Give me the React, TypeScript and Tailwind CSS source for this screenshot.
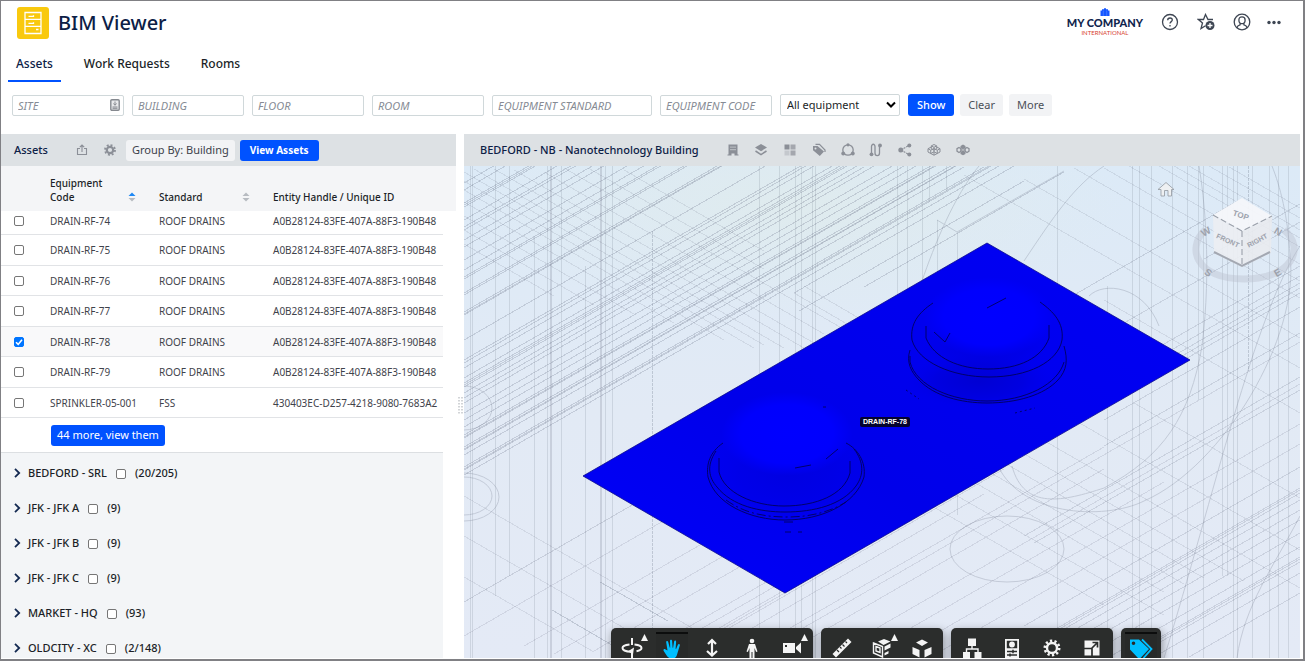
import React, { useState } from 'react';

interface AssetRow {
  code: string;
  standard: string;
  handle: string;
}

interface BuildingGroup {
  name: string;
  count: string;
}

const ASSETS: AssetRow[] = [
  { code: 'DRAIN-RF-74', standard: 'ROOF DRAINS', handle: 'A0B28124-83FE-407A-88F3-190B48' },
  { code: 'DRAIN-RF-75', standard: 'ROOF DRAINS', handle: 'A0B28124-83FE-407A-88F3-190B48' },
  { code: 'DRAIN-RF-76', standard: 'ROOF DRAINS', handle: 'A0B28124-83FE-407A-88F3-190B48' },
  { code: 'DRAIN-RF-77', standard: 'ROOF DRAINS', handle: 'A0B28124-83FE-407A-88F3-190B48' },
  { code: 'DRAIN-RF-78', standard: 'ROOF DRAINS', handle: 'A0B28124-83FE-407A-88F3-190B48' },
  { code: 'DRAIN-RF-79', standard: 'ROOF DRAINS', handle: 'A0B28124-83FE-407A-88F3-190B48' },
  { code: 'SPRINKLER-05-001', standard: 'FSS', handle: '430403EC-D257-4218-9080-7683A2' },
];

const GROUPS: BuildingGroup[] = [
  { name: 'BEDFORD - SRL', count: '(20/205)' },
  { name: 'JFK - JFK A', count: '(9)' },
  { name: 'JFK - JFK B', count: '(9)' },
  { name: 'JFK - JFK C', count: '(9)' },
  { name: 'MARKET - HQ', count: '(93)' },
  { name: 'OLDCITY - XC', count: '(2/148)' },
];

const CHECKBOX =
  'block size-[10px] shrink-0 appearance-none rounded-[2px] border border-[#767676] bg-white checked:border-[#0075ff] checked:bg-[#0075ff]';

// --- Header ---

const AppLogo = () => (
  <svg viewBox="0 0 32 32" className="size-8">
    <rect width="32" height="32" rx="3" fill="#f9c90e" />
    <g fill="none" stroke="#fff" strokeWidth="1.3">
      <path d="M8 5.5h16v21H8zM8.5 12.3h15M8.5 19.3h15" />
      <path d="M11.5 9.3h5v-1M11.5 16.3h5v-1M19 22.5h2.5" />
    </g>
  </svg>
);

const CompanyLogo = () => (
  <div className="flex flex-col items-center">
    <svg viewBox="0 0 10 8" className="h-2 w-[10px]">
      <path d="M0.5 8V2.500h1.500V1.300h2V0.300h2v1h2v1.200h1.500V8z" fill="#1456ff" />
      <path d="M3.300 2.500V8M6.700 2.500V8" stroke="#6c98ff" strokeWidth="0.5" />
    </svg>
    <span className="font-['Lato',sans-serif] text-[11px] leading-[13px] font-black text-[#10254d]">MY COMPANY</span>
    <span className="font-['Lato',sans-serif] text-[6px] leading-[7px] text-[#d8452f]">INTERNATIONAL</span>
  </div>
);

const HelpIcon = () => (
  <svg viewBox="0 0 18 18" className="size-[18px]" fill="none" stroke="#3e4653" strokeWidth="1.3">
    <circle cx="9" cy="9" r="7.500" />
    <path d="M6.700 7.200c0-1.400 1-2.200 2.300-2.200s2.300.8 2.300 2c0 1.600-2.300 1.700-2.300 3.600" />
    <path d="M9 12v1.400" />
  </svg>
);

const StarIcon = () => (
  <svg viewBox="0 0 18 18" className="size-[18px]">
    <path
      d="M16 6.500h-5L8.500 1.500 6.500 6.500H1.400l4.100 3.500-1.500 5.500 4.500-2.800"
      fill="none"
      stroke="#3e4653"
      strokeWidth="1.3"
    />
    <circle cx="13" cy="12.500" r="4.500" fill="#3e4653" />
    <path d="M13 10v5M10.500 12.500h5" stroke="#fff" strokeWidth="1.3" />
  </svg>
);

const UserIcon = () => (
  <svg viewBox="0 0 18 18" className="size-[18px]" fill="none" stroke="#3e4653" strokeWidth="1.3">
    <circle cx="9" cy="9" r="7.800" />
    <path d="M9 3.800c2 0 3.100 1.300 3.100 3.100S11 10.700 9 10.700 5.900 8.800 5.900 6.900 7 3.800 9 3.800z" />
    <path d="M4 14.800c.3-1.700 1.300-2.500 3-2.900l.3-1.500M14 14.800c-.3-1.700-1.300-2.500-3-2.900l-.3-1.500" />
  </svg>
);

const Header = () => (
  <header className="flex h-11 items-center justify-between pr-[22px] pl-4">
    <div className="flex items-center gap-[9px]">
      <AppLogo />
      <h1 className="text-[20px] font-medium text-[#0c2046]">BIM Viewer</h1>
    </div>
    <div className="flex items-center gap-[18px] pb-[2px]">
      <CompanyLogo />
      <button aria-label="Help"><HelpIcon /></button>
      <button aria-label="Add to favorites"><StarIcon /></button>
      <button aria-label="Profile"><UserIcon /></button>
      <button aria-label="More options" className="-ml-[2px]">
        <svg viewBox="0 0 14 18" className="h-[18px] w-[14px]" fill="#3e4653">
          <circle cx="2" cy="9.500" r="1.700" />
          <circle cx="7" cy="9.500" r="1.700" />
          <circle cx="12" cy="9.500" r="1.700" />
        </svg>
      </button>
    </div>
  </header>
);

const TABS = ['Assets', 'Work Requests', 'Rooms'];

const Tabs = () => {
  const [active, setActive] = useState('Assets');
  return (
    <nav className="flex h-[37px] gap-[15px] pl-[7px]">
      {TABS.map(tab => (
        <button
          key={tab}
          onClick={() => setActive(tab)}
          className={`border-b-2 px-2 pt-[2px] text-[12px] font-medium ${tab === active ? 'border-[#0052ff] text-[#0c2046]' : 'border-transparent text-[#1b1f27]'}`}
        >
          {tab}
        </button>
      ))}
    </nav>
  );
};

// --- Filters ---

const INPUT =
  'block h-[21px] w-full rounded-[2px] border border-[#d0d8da] px-[5px] text-[11px] placeholder:text-[#868b94] placeholder:italic';

const FilterBar = () => (
  <form className="flex items-center gap-2 pt-3 pl-[11px]" onSubmit={e => e.preventDefault()}>
    <div className="relative w-[112px]">
      <input aria-label="Site" placeholder="SITE" className={INPUT} />
      <svg viewBox="0 0 10 12" className="absolute top-[4px] right-[4px] h-3 w-[10px]">
        <rect x="0.800" y="0.800" width="8.400" height="10.400" rx="1" fill="#e9eaec" stroke="#85898f" strokeWidth="1.400" />
        <path d="M5 2.500v3M3.500 4.500L5 6.300l1.500-1.800M2.500 8h5M2.500 9.300h5" fill="none" stroke="#85898f" />
      </svg>
    </div>
    <div className="w-[112px]"><input aria-label="Building" placeholder="BUILDING" className={INPUT} /></div>
    <div className="w-[112px]"><input aria-label="Floor" placeholder="FLOOR" className={INPUT} /></div>
    <div className="w-[112px]"><input aria-label="Room" placeholder="ROOM" className={INPUT} /></div>
    <div className="w-40"><input aria-label="Equipment standard" placeholder="EQUIPMENT STANDARD" className={INPUT} /></div>
    <div className="w-[112px]"><input aria-label="Equipment code" placeholder="EQUIPMENT CODE" className={INPUT} /></div>
    <div className="relative w-[120px]">
      <select
        aria-label="Equipment filter"
        className="block h-[22px] w-full appearance-none rounded-[2px] border border-[#d0d8da] bg-white px-[6px] text-[11px] text-[#1b1f27]"
      >
        <option>All equipment</option>
      </select>
      <svg viewBox="0 0 10 8" className="pointer-events-none absolute top-[7px] right-[4px] h-2 w-[10px]">
        <path d="M1 1.500l4 4 4-4" fill="none" stroke="#000" strokeWidth="2" />
      </svg>
    </div>
    <div className="flex gap-[6px]">
      <button className="h-[22px] rounded-[3px] bg-[#0052ff] px-[9px] text-[11px] font-medium text-white">Show</button>
      <button className="h-[22px] rounded-[3px] bg-[#f2f3f5] px-2 text-[11px] text-[#4a4f58]">Clear</button>
      <button className="h-[22px] rounded-[3px] bg-[#f2f3f5] px-2 text-[11px] text-[#4a4f58]">More</button>
    </div>
  </form>
);

// --- Assets panel ---

const SortIcon = ({ active }: { active?: boolean }) => (
  <svg viewBox="0 0 8 10" className="mb-[2px] h-[10px] w-2 shrink-0">
    <path d="M4 0.500L7.500 4h-7z" fill={active ? '#1e88f5' : '#b7bbc1'} />
    <path d="M4 9.500L7.500 6h-7z" fill="#b7bbc1" />
  </svg>
);

const Check = ({ label, checked, onChange }: { label: string; checked: boolean; onChange: () => void }) => (
  <span className="relative block w-[10px]">
    <input type="checkbox" aria-label={label} checked={checked} onChange={onChange} className={CHECKBOX} />
    {checked && (
      <svg viewBox="0 0 10 10" className="pointer-events-none absolute inset-0 size-[10px]">
        <path d="M2 5.200l2.200 2.200L8 2.800" fill="none" stroke="#fff" strokeWidth="1.600" />
      </svg>
    )}
  </span>
);

const AssetsPanel = () => {
  const [selected, setSelected] = useState<string[]>(['DRAIN-RF-78']);

  const toggle = (key: string) => {
    setSelected(prev => (prev.includes(key) ? prev.filter(k => k !== key) : [...prev, key]));
  };

  return (
    <section className="flex w-[455px] shrink-0 flex-col overflow-hidden">
      <div className="flex h-8 shrink-0 items-center bg-[#dde1e4] pl-[13px]">
        <h2 className="w-[62px] text-[11px] font-medium text-[#0c2046]">Assets</h2>
        <button aria-label="Export" className="mr-4">
          <svg viewBox="0 0 12 12" className="size-3" fill="none" stroke="#8b8f97" strokeWidth="1.100">
            <path d="M4 4.500H1.500v6h9v-6H8M6 8V1.200M3.800 3.200L6 1l2.200 2.200" />
          </svg>
        </button>
        <button aria-label="Settings" className="mr-[10px]">
          <svg viewBox="0 0 12 12" className="size-3" fill="none" stroke="#8b8f97">
            <circle cx="6" cy="6" r="3.200" strokeWidth="2.200" />
            <circle cx="6" cy="6" r="5" strokeWidth="1.800" strokeDasharray="1.960 1.960" />
          </svg>
        </button>
        <button className="mr-[5px] h-[21px] rounded-[3px] bg-[#f2f3f5] px-[6px] text-[11px] text-[#3c414b]">Group By: Building</button>
        <button className="h-[21px] rounded-[3px] bg-[#0052ff] px-[10px] text-[10px] font-bold text-white">View Assets</button>
      </div>

      <table className="w-full table-fixed border-separate border-spacing-0 text-left text-[10px]">
        <colgroup>
          <col className="w-[42px]" />
          <col className="w-[109px]" />
          <col className="w-[114px]" />
          <col />
          <col className="w-[13px]" />
        </colgroup>
        <thead>
          <tr className="h-[45px] bg-[#f4f5f7] align-bottom leading-[14px] text-[#1b1f27]">
            <th aria-label="Select" />
            <th className="pb-[7px] pl-[7px] font-medium">
              <div className="flex items-end justify-between pr-4">
                <span>Equipment<br />Code</span>
                <SortIcon active />
              </div>
            </th>
            <th className="pb-[7px] pl-[7px] font-medium">
              <div className="flex items-end justify-between pr-4">
                <span>Standard</span>
                <SortIcon />
              </div>
            </th>
            <th className="pb-[7px] pl-[7px] font-medium">Entity Handle / Unique ID</th>
            <th aria-hidden="true" />
          </tr>
        </thead>
        <tbody className="leading-4 whitespace-nowrap text-[#3f434b] [&_td]:p-0 [&_td:not(:last-child)]:border-b [&_td:not(:last-child)]:border-[#e1e3e6]">
          {ASSETS.map((row, i) => {
            const checked = selected.includes(row.code);
            const cell = `overflow-hidden pl-[7px]! ${checked ? 'bg-[#f9f9fa]' : ''}`;
            return (
              <tr key={row.code} className={i === 0 ? 'h-6 [&_td]:pb-[3px]!' : 'h-[30px] even:h-[31px]'}>
                <td className={`pl-[13px]! ${checked ? 'bg-[#f9f9fa]' : ''}`}>
                  <Check label={row.code} checked={checked} onChange={() => toggle(row.code)} />
                </td>
                <td className={cell}>{row.code}</td>
                <td className={cell}>{row.standard}</td>
                <td className={cell}>{row.handle}</td>
                <td />
              </tr>
            );
          })}
        </tbody>
      </table>

      <div className="mr-[13px] h-[35px] shrink-0 border-b border-[#dcdfe2] pt-[7px] pl-[50px]">
        <button className="block h-[21px] rounded-[3px] bg-[#0052ff] px-[6px] text-[11px] text-white">44 more, view them</button>
      </div>

      <ul className="mr-[13px] flex-1 bg-[#f3f5f7] pt-[3px]">
        {GROUPS.map(group => (
          <li key={group.name} className="flex h-[35px] items-center text-[11px] font-medium text-[#1b1f27]">
            <button aria-label={`Expand ${group.name}`} className="mr-[7px] ml-3 pb-[2px]">
              <svg viewBox="0 0 8 10" className="h-[10px] w-2">
                <path d="M2 0.800L6.200 5 2 9.200" fill="none" stroke="#142a52" strokeWidth="1.800" />
              </svg>
            </button>
            <span className="mr-[9px]">{group.name}</span>
            <Check label={group.name} checked={selected.includes(group.name)} onChange={() => toggle(group.name)} />
            <span className="ml-[9px]">{group.count}</span>
          </li>
        ))}
      </ul>
    </section>
  );
};

// --- Model scene ---

const SLOPE = 0.577;

// [intercept, from x, to x]
type Seg = [number, number, number];

const rise = (segs: Seg[]) =>
  segs.map(([c, a, b]) => `M${a} ${Math.round(c - SLOPE * a)}L${b} ${Math.round(c - SLOPE * b)}`).join('');
const fall = (segs: Seg[]) =>
  segs.map(([c, a, b]) => `M${a} ${Math.round(c + SLOPE * a)}L${b} ${Math.round(c + SLOPE * b)}`).join('');
const verticals = (segs: Seg[]) => segs.map(([x, a, b]) => `M${x}.5 ${a}V${b}`).join('');

const ROOF_RISE: Seg[] = [
  [17, 0, 40], [24, 0, 60], [37, 0, 70], [41, 0, 80], [54, 0, 100], [61, 0, 110], [64, 0, 115], [74, 0, 130],
  [81, 0, 150], [94, 0, 170], [104, 0, 190], [111, 0, 200], [113, 0, 200], [127, 0, 230], [129, 0, 230],
  [146, 0, 260], [149, 0, 270], [174, 0, 310], [194, 0, 340], [197, 0, 345], [202, 0, 350], [212, 0, 370],
  [217, 0, 376], [221, 0, 383], [227, 0, 393], [232, 0, 400], [237, 0, 410], [247, 0, 430], [254, 0, 440],
  [261, 0, 452], [269, 0, 470], [272, 0, 475], [281, 0, 490], [284, 0, 492], [289, 0, 500], [301, 0, 520],
  [304, 0, 527], [309, 0, 535], [317, 330, 550], [338, 335, 560], [352, 400, 600],
];

const ROOF_DARK: Seg[] = [
  [39, 0, 70], [148, 0, 260], [219, 0, 380], [271, 0, 472], [283, 0, 491], [303, 0, 525], [436, 0, 170], [481, 570, 770],
];

const LOWER_RISE: Seg[] = [
  [470, 0, 220], [515, 60, 290], [540, 90, 320], [560, 130, 400], [590, 200, 500], [600, 190, 520],
  [609, 200, 540], [612, 210, 540], [615, 215, 540], [628, 240, 520], [650, 300, 640], [658, 320, 836],
  [672, 330, 640], [700, 380, 836], [720, 400, 700], [740, 440, 836], [760, 470, 836],
];

const RIGHT_RISE: Seg[] = [
  [520, 740, 836], [538, 660, 836], [582, 620, 836], [592, 610, 836], [599, 600, 836], [604, 600, 836],
  [609, 600, 836], [623, 640, 836], [649, 640, 836], [693, 560, 836], [706, 570, 836],
  [783, 560, 836], [804, 545, 836], [806, 545, 836], [809, 550, 836], [816, 560, 836], [826, 580, 836], [836, 600, 836],
  [849, 615, 836], [863, 640, 836], [873, 660, 836], [875, 665, 836], [878, 670, 836], [889, 690, 836], [909, 725, 836],
];

const ROOF_FALL: Seg[] = [
  [78, 0, 90], [64, 0, 130], [50, 0, 170], [36, 0, 210], [24, 0, 260], [15, 0, 290], [6, 0, 300], [-3, 10, 320],
  [-14, 30, 340], [-25, 50, 350], [-40, 80, 360], [-56, 100, 376], [-70, 124, 300],
  [-88, 160, 300], [-63, 330, 400], [-76, 340, 410], [330, 0, 280], [370, 0, 200], [411, 0, 130],
];

const RIGHT_FALL: Seg[] = [
  [-350, 610, 836], [-367, 640, 836], [-384, 665, 836], [-401, 695, 836], [-410, 710, 836], [-418, 725, 836],
  [-430, 745, 836], [-440, 765, 836], [-310, 560, 836], [-280, 500, 836], [-235, 640, 836],
  [-150, 670, 836], [-98, 520, 836], [-60, 480, 836], [-35, 460, 780],
  [-15, 440, 740], [3, 440, 720], [22, 420, 700], [45, 410, 700], [70, 400, 640],
];

const THIN_VERTICALS: Seg[] = [
  [6, 0, 492], [8, 0, 492], [31, 0, 430], [45, 0, 410], [70, 70, 492], [83, 0, 492], [97, 0, 492], [121, 100, 492],
  [141, 0, 492], [148, 0, 492], [295, 0, 492], [315, 0, 492], [331, 0, 492], [337, 0, 492], [348, 0, 492], [351, 0, 492],
  [433, 0, 160], [443, 0, 160], [458, 0, 130], [465, 0, 36], [482, 0, 25], [473, 54, 110], [493, 66, 349],
  [593, 0, 492], [643, 120, 492], [668, 0, 492], [675, 0, 492], [687, 0, 492], [708, 0, 492], [723, 0, 492],
  [734, 0, 234], [739, 0, 492], [758, 0, 410], [763, 0, 410], [769, 0, 492], [773, 0, 492], [788, 0, 492],
  [805, 0, 492], [814, 0, 492], [824, 0, 492],
];

const ModelScene = () => (
  <svg viewBox="0 0 836 492" preserveAspectRatio="xMinYMin slice" className="absolute inset-0 h-full w-full">
    <defs>
      <linearGradient id="sky" x1="0" y1="0" x2="0" y2="1">
        <stop offset="0" stopColor="#dceaf7" />
        <stop offset="0.5" stopColor="#e2eaf5" />
        <stop offset="1" stopColor="#e4eaf6" />
      </linearGradient>
      <linearGradient id="plane" x1="0" y1="1" x2="1" y2="0">
        <stop offset="0" stopColor="#0000fb" />
        <stop offset="0.400" stopColor="#0000ea" />
        <stop offset="1" stopColor="#0000f5" />
      </linearGradient>
      <radialGradient id="dome">
        <stop offset="0" stopColor="#0000ff" />
        <stop offset="0.700" stopColor="#0000fd" />
        <stop offset="1" stopColor="#0000fd" stopOpacity="0" />
      </radialGradient>
      <radialGradient id="shade">
        <stop offset="0" stopColor="#0000c8" />
        <stop offset="0.600" stopColor="#0000dc" />
        <stop offset="1" stopColor="#0000ea" stopOpacity="0" />
      </radialGradient>
      <radialGradient id="haze">
        <stop offset="0" stopColor="#dfebee" />
        <stop offset="1" stopColor="#dfebee" stopOpacity="0" />
      </radialGradient>
    </defs>
    <rect width="836" height="492" fill="url(#sky)" />
    <ellipse cx="330" cy="40" rx="330" ry="110" fill="url(#haze)" />

    <g fill="none" stroke="#747b8e" shapeRendering="crispEdges">
      <path d={rise(ROOF_RISE)} opacity="0.280" />
      <path d={rise(ROOF_DARK)} opacity="0.250" />
      <path d={rise(LOWER_RISE)} opacity="0.180" />
      <path d={rise(RIGHT_RISE)} opacity="0.220" />
      <path d={fall(ROOF_FALL)} opacity="0.160" />
      <path d={fall(RIGHT_FALL)} opacity="0.160" />
      <path d={verticals(THIN_VERTICALS)} opacity="0.200" />
      <path d="M87 0V492M137 0V492" strokeWidth="2" opacity="0.240" />
      <path d="M188.500 65V492M784.500 0V205" strokeDasharray="3 1" opacity="0.320" />
      <path d="M136 416L204 455M88 444L170 492" opacity="0.320" />
    </g>

    <g fill="none" stroke="#747b8e" opacity="0.280">
      <ellipse cx="543" cy="383" rx="57" ry="33" />
      <ellipse cx="0" cy="331" rx="35" ry="24" />
      <ellipse cx="0" cy="330" rx="28" ry="19" />
      <ellipse cx="0" cy="242" rx="28" ry="22" />
      <path d="M532 295C552 350 640 355 680 335C760 300 836 170 826 90C824 50 816 20 808 0" />
      <path d="M548 300C560 345 600 335 640 322C700 290 726 250 738 180C748 100 740 30 735 0" />
      <path d="M458 115C470 80 490 30 515 0M560 95C590 50 610 20 640 0M625 130C640 115 680 120 695 160" />
      <path d="M836 80C790 150 750 330 700 492M773 492C780 440 810 400 836 350" />
      <path d="M473 54L493 66L600 5" />
    </g>

    <path d="M119 310L523 77L726 194L321 427Z" fill="url(#plane)" stroke="#0a0a8c" strokeWidth="0.800" />

    <g>
      <ellipse cx="323" cy="308" rx="80" ry="50" fill="url(#shade)" opacity="0.300" />
      <ellipse cx="323" cy="268" rx="66" ry="42" fill="url(#dome)" />
      <g fill="none" stroke="#00005c" strokeWidth="0.900">
        <path d="M259 277C246 286 242 298 244 311C251 338 286 354 321 354C358 354 392 338 400 311C402 296 394 283 382 277" />
        <path d="M252 285C242 300 245 312 253 321C268 340 296 346 321 346C350 346 378 339 392 320C400 309 400 296 390 283" />
        <path d="M255 292V306C260 327 290 340 320 340C352 340 380 329 386 307V295" />
        <path d="M262 334C280 347 300 351 323 351C346 351 366 346 382 336" strokeDasharray="9 3 2 3" />
        <path d="M331 302L347 299M362 293L374 283M320 356H329M321 366H327M334 366H338M359 241H362" />
      </g>
    </g>
    <g>
      <ellipse cx="515" cy="215" rx="74" ry="28" fill="url(#shade)" opacity="0.700" />
      <ellipse cx="521" cy="180" rx="66" ry="34" fill="url(#shade)" opacity="0.350" />
      <ellipse cx="525" cy="151" rx="65" ry="40" fill="url(#dome)" />
      <g fill="none" stroke="#00005c" strokeWidth="0.900">
        <path d="M469 137C454 147 446 158 448 174C454 196 488 211 525 211C564 211 594 196 598 174C600 157 590 146 576 136" />
        <path d="M462 160V172C470 192 495 203 524 203C555 203 578 192 585 172V159" />
        <path d="M446 184C442 196 447 206 455 214C470 230 497 237 523 237C553 237 580 229 594 214C603 204 604 194 600 180" />
        <path d="M446 190V196C452 220 488 235 523 235C562 235 594 218 600 196" />
        <path d="M470 166L481 176L486 167M523 142L542 132" />
        <path d="M551 247L571 242M442 224L455 233" strokeDasharray="2 3" />
      </g>
    </g>
  </svg>
);

const ViewCube = () => (
  <svg viewBox="690 0 146 126" className="absolute top-0 right-0 h-[126px] w-[146px]">
    <path
      d="M694 23.500L702 16.500L710 23.500H707.500V30H704V24.500H700.500V30H697V23.500Z"
      fill="#eef0f2"
      stroke="#9aa0a8"
      strokeWidth="0.900"
    />
    <path d="M741 64C722 82 732 113 780 113C828 113 842 82 820 64" fill="none" stroke="#b9bfcd" strokeWidth="7" opacity="0.420" />
    <path d="M749 49L778 65V101L750 87Z" fill="#eceef2" opacity="0.920" />
    <path d="M808 50L778 65V101L807 87Z" fill="#e8eaef" opacity="0.920" />
    <path d="M778 32L808 50L778 65L749 49Z" fill="#f5f7fa" opacity="0.940" />
    <path d="M750 86L778 100L806 86" fill="none" stroke="#a3a8b2" strokeWidth="2" />
    <path d="M749 49L778 65L808 50M778 65V100" fill="none" stroke="#9aa0aa" strokeWidth="1.100" strokeDasharray="6 3" />
    <g fill="#9da2ac" fontFamily="Liberation Sans, sans-serif" fontWeight="700" fontSize="8" textAnchor="middle">
      <text x="777" y="52" transform="rotate(18 777 49)">TOP</text>
      <text x="764" y="77" transform="rotate(24 764 74)" fontSize="7">FRONT</text>
      <text x="793" y="77" transform="rotate(-28 793 74)" fontSize="7">RIGHT</text>
      <g fontSize="10">
        <text x="742" y="69" transform="rotate(-30 742 66)">W</text>
        <text x="814" y="69" transform="rotate(30 814 66)">N</text>
        <text x="744" y="110" transform="rotate(35 744 107)">S</text>
        <text x="814" y="110" transform="rotate(-30 814 107)">E</text>
      </g>
    </g>
  </svg>
);

// --- Viewer toolbars ---

const HEADER_TOOLS: { label: string; icon: React.ReactNode }[] = [
  {
    label: 'Buildings',
    icon: <path d="M3.500 2.500h9v10h1v1h-4v-2h-3v2h-4v-1h1zM5.500 4.500v1.200h1V4.500zm2 0v1.200h1V4.500zm2 0v1.200h1V4.500zm-4 2.500v1.200h1V7zm2 0v1.200h1V7zm2 0v1.200h1V7z" fillRule="evenodd" />,
  },
  {
    label: 'Layers',
    icon: (
      <>
        <path d="M8 2l6 3.600-6 3.600-6-3.600z" />
        <path d="M2.500 9L8 12.600 13.500 9" fill="none" stroke="#8b8f97" strokeWidth="1.500" />
      </>
    ),
  },
  {
    label: 'Tiles',
    icon: (
      <>
        <path d="M2.500 2.500h5v5h-5z" />
        <path d="M8.500 2.500h5v5h-5zM8.500 8.500h5v5h-5z" opacity="0.700" />
        <path d="M2.500 8.500h5v5h-5z" opacity="0.300" />
      </>
    ),
  },
  {
    label: 'Tags',
    icon: (
      <>
        <path d="M2 4h4.500L13 9.500 8.800 14 2 8.300zM4.500 5.500a1 1 0 100 2 1 1 0 000-2z" fillRule="evenodd" />
        <path d="M4.500 2.300h4L14 8v2" fill="none" stroke="#8b8f97" strokeWidth="1.200" />
      </>
    ),
  },
  {
    label: 'Systems',
    icon: (
      <>
        <circle cx="8" cy="8" r="5.200" fill="none" stroke="#8b8f97" strokeWidth="1.300" />
        <circle cx="8" cy="2.800" r="1.600" />
        <circle cx="3.200" cy="11.500" r="1.900" />
        <circle cx="12.800" cy="11.500" r="1.900" />
      </>
    ),
  },
  {
    label: 'Trace',
    icon: (
      <>
        <path d="M3.500 11V4.500c0-3 3.500-3 3.500 0v6.500c0 3.500 4.500 3.500 4.500 0V4" fill="none" stroke="#8b8f97" strokeWidth="1.300" />
        <circle cx="3.500" cy="12.300" r="1.900" />
        <circle cx="12" cy="3.500" r="1.900" />
      </>
    ),
  },
  {
    label: 'Relations',
    icon: (
      <>
        <path d="M4 8l8-4.700M4 8l8 4.700" fill="none" stroke="#8b8f97" strokeWidth="1.100" strokeDasharray="2 1" />
        <circle cx="3.800" cy="8" r="2.500" />
        <circle cx="12.300" cy="3.500" r="2" />
        <circle cx="12.300" cy="12.500" r="2" />
      </>
    ),
  },
  {
    label: 'Isolate model',
    icon: (
      <g fill="none" stroke="#8b8f97" strokeWidth="1">
        <path d="M8 2.500l2.700 1.400v2.800L8 8.200 5.300 6.700V3.900zM5.300 3.900L8 5.300l2.700-1.400M8 5.300v7.900" />
        <path d="M5.300 5L2 6.700v3.300L4.700 11.500 8 9.800M10.700 5L14 6.700v3.300l-2.700 1.500L8 9.800M2 6.700l2.700 1.500L8 6.500l3.300 1.700L14 6.700M4.700 8.200v3.300L8 13.200l3.300-1.700V8.200" />
      </g>
    ),
  },
  {
    label: 'Explode model',
    icon: (
      <>
        <path d="M8 2.500l2.500 1.400v2L8 7.200 5.500 5.900v-2zM8 8.500l2.500 1.400v2L8 13.200l-2.500-1.300v-2z" />
        <path d="M4 5.500l2 1.100v2.600L4 10.500 2 9.200V6.600zM12 5.500l2 1.100v2.600l-2 1.300-2-1.300V6.600z" fill="none" stroke="#8b8f97" strokeWidth="1.300" />
        <path d="M5 8h6" stroke="#8b8f97" />
      </>
    ),
  },
];

const ToolButton = ({ label, active, menu, children }: { label: string; active?: boolean; menu?: boolean; children: React.ReactNode }) => (
  <button
    aria-label={label}
    className={`relative flex size-8 items-center justify-center ${active ? 'border-t-2 border-[#0c0d0d] bg-[#282a29] text-[#00bfff]' : 'text-[#f4f4f4]'}`}
  >
    <svg viewBox="0 0 24 24" className="size-6" fill="currentColor">{children}</svg>
    {menu && (
      <svg viewBox="0 0 7 7" className="absolute top-[2px] right-0 size-[7px]" fill="#f4f4f4">
        <path d="M3.500 0L7 7H0z" />
      </svg>
    )}
  </button>
);

const TOOL_GROUP = 'flex h-10 gap-2 rounded-[5px] bg-[#2b2d2c] px-[5px] py-1 shadow-[1px_3px_10px_rgba(0,0,0,0.4)]';

const ModelToolbar = () => (
  <div className="absolute inset-x-0 -bottom-[10px] flex justify-center gap-2 pl-2">
    <div className={TOOL_GROUP}>
      <ToolButton label="Orbit" menu>
        <path d="M11 2h2v7h-2zM11 16h2v6h-2z" />
        <path d="M9.500 8.500C5 9 2.500 10.500 2.500 12c0 2.200 4 3.700 9 3.700M14.500 8.500c4 .4 7 1.700 7 3.500 0 1.500-2 2.600-5 3.200" fill="none" stroke="currentColor" strokeWidth="2" />
        <path d="M14 11.500l-1 7-5-3.300z" />
      </ToolButton>
      <ToolButton label="Pan" active>
        <path d="M7.500 13.500L6.200 5.200c-.2-1.500 1.700-1.700 2-.3l1.500 5.700.5.100L10 3.800c0-1.500 2-1.500 2.100 0l.5 6.900h.5l1-6.200c.3-1.400 2.200-1.100 2 .4l-.5 6.800.5.200 1.800-4.200c.6-1.300 2.300-.6 1.900.8L17.500 16c-.7 3-1.500 5.500-5.500 5.500-3.500 0-4.700-1.800-6-4l-2.300-3.600c-.8-1.300.6-2.400 1.800-1.500z" />
      </ToolButton>
      <ToolButton label="Zoom">
        <path d="M12 4v15M8 8l4-4 4 4M7 15l5 4.500 5-4.500" fill="none" stroke="currentColor" strokeWidth="2.200" />
      </ToolButton>
      <ToolButton label="First person">
        <circle cx="12" cy="5" r="2.300" />
        <path d="M9 8h6l2.500 7.500-1.400.5L14.500 12v10h-2v-6h-1v6h-2V12L7.900 16l-1.400-.5z" />
      </ToolButton>
      <ToolButton label="Camera" menu>
        <path d="M3 7h12v10H3zM5 9v2h2V9zM16 11l5-4.500v11L16 13z" fillRule="evenodd" />
      </ToolButton>
    </div>
    <div className={TOOL_GROUP}>
      <ToolButton label="Measure">
        <path d="M2.500 18L18 2.500 21.500 6 6 21.500z" />
        <path d="M7 14l2 2M10 11l1.500 1.500M12.500 8.500l2 2M15.500 5.500L17 7" stroke="#2b2d2c" strokeWidth="1.200" />
      </ToolButton>
      <ToolButton label="Section" menu>
        <path d="M8 5.500l6-2.500 6.500 2.500-7 3.500zM14.500 10.500l6-3v4l-6 3zM14.500 17l4-2v2.500l-4 2z" />
        <path d="M3.500 7l9 3.500V21l-9-4zM6 10.500l4 1.500v4.500L6 15z" fill="none" stroke="currentColor" strokeWidth="1.400" />
      </ToolButton>
      <ToolButton label="Explode">
        <path d="M12 3.500l6 3-6 3.500-6-3.500zM2.500 11l7 3v7.500l-7-3.500zM21.500 11l-7 3v7.500l7-3.500z" />
      </ToolButton>
    </div>
    <div className={TOOL_GROUP}>
      <ToolButton label="Model browser">
        <path d="M8 2.500h8v7.500H8zM3 16h7v6H3zM14.500 16h7v6h-7z" />
        <path d="M12 10v3M6.500 16v-3H18v3" fill="none" stroke="currentColor" strokeWidth="1.400" />
      </ToolButton>
      <ToolButton label="Properties">
        <path d="M5 3h14v19H5zM6.800 4.800v7.400h10.400V4.800z" fillRule="evenodd" />
        <circle cx="12" cy="8.500" r="2.900" />
        <path d="M7 15.500h10M7 19h10" stroke="#2b2d2c" strokeWidth="1.300" />
        <path d="M13 13.700v3.500M10 17.500v3" stroke="#2b2d2c" strokeWidth="1.500" />
      </ToolButton>
      <ToolButton label="Settings">
        <circle cx="12" cy="12" r="5" fill="none" stroke="currentColor" strokeWidth="2.400" />
        <circle cx="12" cy="12" r="7.200" fill="none" stroke="currentColor" strokeWidth="2.600" strokeDasharray="2.260 2.260" />
      </ToolButton>
      <ToolButton label="Full screen">
        <path d="M4.500 4.500h15v15h-15z" />
        <path d="M4 12.500h8V20M11 13l6-6M12.500 6.500H17.500V11.500" fill="none" stroke="#2b2d2c" strokeWidth="1.700" />
      </ToolButton>
    </div>
    <div className="flex h-10 rounded-[5px] bg-[#2b2d2c] p-1 shadow-[1px_3px_10px_rgba(0,0,0,0.4)]">
      <ToolButton label="Labels" active>
        <path d="M1 2.500h9L20 12l-8.500 9H9L1 12.500zM4.500 4.500a1.800 1.800 0 100 3.600 1.800 1.800 0 000-3.600z" fillRule="evenodd" />
        <path d="M13 2.500l9.500 9.500-8 9" fill="none" stroke="currentColor" strokeWidth="1.800" />
      </ToolButton>
    </div>
  </div>
);

const ViewerPanel = () => (
  <section className="flex min-w-0 flex-1 flex-col">
    <div className="flex h-8 shrink-0 items-center bg-[#dde1e4] pl-4">
      <h2 className="text-[11px] font-medium text-[#0c2046]">BEDFORD - NB - Nanotechnology Building</h2>
      <div className="ml-[26px] flex w-[246px] justify-between">
        {HEADER_TOOLS.map(tool => (
          <button key={tool.label} aria-label={tool.label}>
            <svg viewBox="0 0 16 16" className="size-4" fill="#8b8f97">{tool.icon}</svg>
          </button>
        ))}
      </div>
    </div>
    <div className="relative flex-1 overflow-hidden bg-[#e3eaf6]">
      <ModelScene />
      <ViewCube />
      <span className="absolute top-[251px] left-[396px] rounded-[2px] bg-[#04042e] px-[3px] font-['Liberation_Sans',sans-serif] text-[7px] leading-[10px] font-bold text-white">
        DRAIN-RF-78
      </span>
      <ModelToolbar />
    </div>
  </section>
);

const App: React.FC = () => {
  return (
    <div className="h-screen bg-white pr-[9px] pb-[9px] font-['Noto_Sans',sans-serif]">
      <div className="flex h-full flex-col overflow-hidden border-t border-r-2 border-b-2 border-l border-[#808084] bg-white pb-px">
        <Header />
        <Tabs />
        <FilterBar />
        <main className="mt-[18px] flex min-h-0 flex-1 pr-[3px]">
          <AssetsPanel />
          <div className="flex w-2 shrink-0 items-center justify-center pt-5">
            <svg viewBox="0 0 5 18" className="h-[18px] w-[5px]">
              <path d="M1 0v18M4 0v18" stroke="#c3c6ca" strokeWidth="1.500" strokeDasharray="1.500 1.500" />
            </svg>
          </div>
          <ViewerPanel />
        </main>
      </div>
    </div>
  );
};

export default App;
